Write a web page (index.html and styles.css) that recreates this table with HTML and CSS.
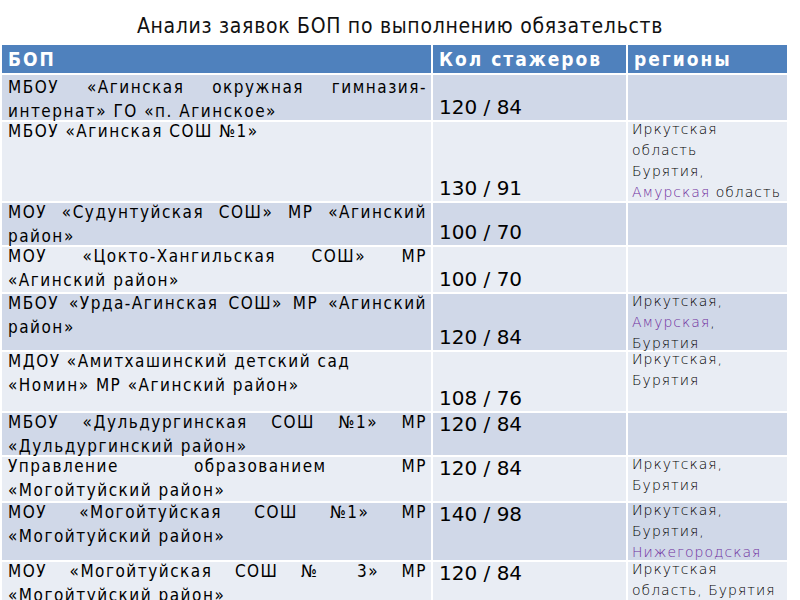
FILE: index.html
```html
<!DOCTYPE html>
<html lang="ru">
<head>
<meta charset="utf-8">
<title>Анализ заявок БОП</title>
<link rel="stylesheet" href="styles.css">
</head>
<body>
<h1 class="title">Анализ заявок БОП по выполнению обязательств</h1>
<div class="table">
  <div class="cell head">БОП</div>
  <div class="cell head">Кол стажеров</div>
  <div class="cell head">регионы</div>

  <div class="cell name dark first"><div class="j">МБОУ «Агинская окружная гимназия-</div><div>интернат» ГО «п. Агинское»</div></div>
  <div class="cell num dark bottom">120 / 84</div>
  <div class="cell reg dark"></div>

  <div class="cell name light"><div>МБОУ «Агинская СОШ №1»</div></div>
  <div class="cell num light bottom">130 / 91</div>
  <div class="cell reg light"><div class="regtext">Иркутская<br>область<br>Бурятия,<br><span class="pur">Амурская</span> область</div></div>

  <div class="cell name dark"><div class="j">МОУ «Судунтуйская СОШ» МР «Агинский</div><div>район»</div></div>
  <div class="cell num dark bottom">100 / 70</div>
  <div class="cell reg dark"></div>

  <div class="cell name light"><div class="j">МОУ «Цокто-Хангильская СОШ» МР</div><div>«Агинский район»</div></div>
  <div class="cell num light bottom">100 / 70</div>
  <div class="cell reg light"></div>

  <div class="cell name dark"><div class="j">МБОУ «Урда-Агинская СОШ» МР «Агинский</div><div>район»</div></div>
  <div class="cell num dark bottom">120 / 84</div>
  <div class="cell reg dark"><div class="regtext">Иркутская,<br><span class="pur">Амурская</span>,<br>Бурятия</div></div>

  <div class="cell name light"><div>МДОУ «Амитхашинский детский сад</div><div>«Номин» МР «Агинский район»</div></div>
  <div class="cell num light bottom">108 / 76</div>
  <div class="cell reg light"><div class="regtext">Иркутская,<br>Бурятия</div></div>

  <div class="cell name dark"><div class="j">МБОУ «Дульдургинская СОШ <span class="nb">№1»</span> МР</div><div>«Дульдургинский район»</div></div>
  <div class="cell num dark">120 / 84</div>
  <div class="cell reg dark"></div>

  <div class="cell name light"><div class="j">Управление образованием МР</div><div>«Могойтуйский район»</div></div>
  <div class="cell num light">120 / 84</div>
  <div class="cell reg light"><div class="regtext">Иркутская,<br>Бурятия</div></div>

  <div class="cell name dark"><div class="j">МОУ «Могойтуйская СОШ <span class="nb">№1»</span> МР</div><div>«Могойтуйский район»</div></div>
  <div class="cell num dark">140 / 98</div>
  <div class="cell reg dark"><div class="regtext">Иркутская,<br>Бурятия,<br><span class="pur">Нижегородская</span></div></div>

  <div class="cell name light"><div class="j">МОУ «Могойтуйская СОШ № 3» МР</div><div>«Могойтуйский район»</div></div>
  <div class="cell num light">120 / 84</div>
  <div class="cell reg light"><div class="regtext">Иркутская<br>область, Бурятия</div></div>
</div>
</body>
</html>
```

FILE: styles.css
```css
html, body {
  margin: 0;
  padding: 0;
  background: #ffffff;
  overflow: hidden;
}
body {
  width: 800px;
  height: 600px;
  font-family: "DejaVu Sans", sans-serif;
  color: #000;
}
.title {
  margin: 0;
  padding-top: 13px;
  height: 32px;
  font-family: "DejaVu Sans Condensed", "DejaVu Sans", sans-serif;
  font-weight: normal;
  font-size: 21px;
  letter-spacing: 0.7px;
  line-height: 26px;
  text-align: center;
  color: #111;
}
.table {
  display: grid;
  grid-template-columns: 429px 193px 159px;
  grid-template-rows: 28px 45px 79px 42px 45px 56px 59px 42px 44px 57px 60px;
  gap: 2px;
  margin-left: 2px;
}
.cell {
  overflow: visible;
  box-sizing: border-box;
  min-width: 0;
}
.head {
  background: #4f81bd;
  color: #fff;
  font-family: "DejaVu Sans Condensed", "DejaVu Sans", sans-serif;
  font-weight: bold;
  font-size: 19px;
  letter-spacing: 2px;
  line-height: 28px;
  padding-left: 6px;
}
.dark { background: #d0d8e8; }
.light { background: #e9edf4; }
.name {
  font-family: "DejaVu Sans Condensed", "DejaVu Sans", sans-serif;
  font-size: 17px;
  letter-spacing: 1.5px;
  line-height: 23.5px;
  padding: 0 4px 0 6px;
  white-space: nowrap;
}
.name > div:first-child {
  margin-top: -2px;
}
.name.first > div:first-child {
  margin-top: 1px;
}
.j {
  text-align: justify;
  text-align-last: justify;
  white-space: normal;
}
.nb {
  display: inline-block;
}
.num {
  font-size: 20px;
  line-height: 22px;
  padding: 0 6px;
  display: flex;
  align-items: flex-start;
}
.num.bottom {
  align-items: flex-end;
  padding-bottom: 2px;
}
.reg {
  font-size: 14px;
  font-weight: 200;
  letter-spacing: 1px;
  line-height: 21px;
  padding: 0 4px;
  white-space: nowrap;
}
.regtext {
  margin-top: -3px;
}
.pur { color: #7030a0; }
```
